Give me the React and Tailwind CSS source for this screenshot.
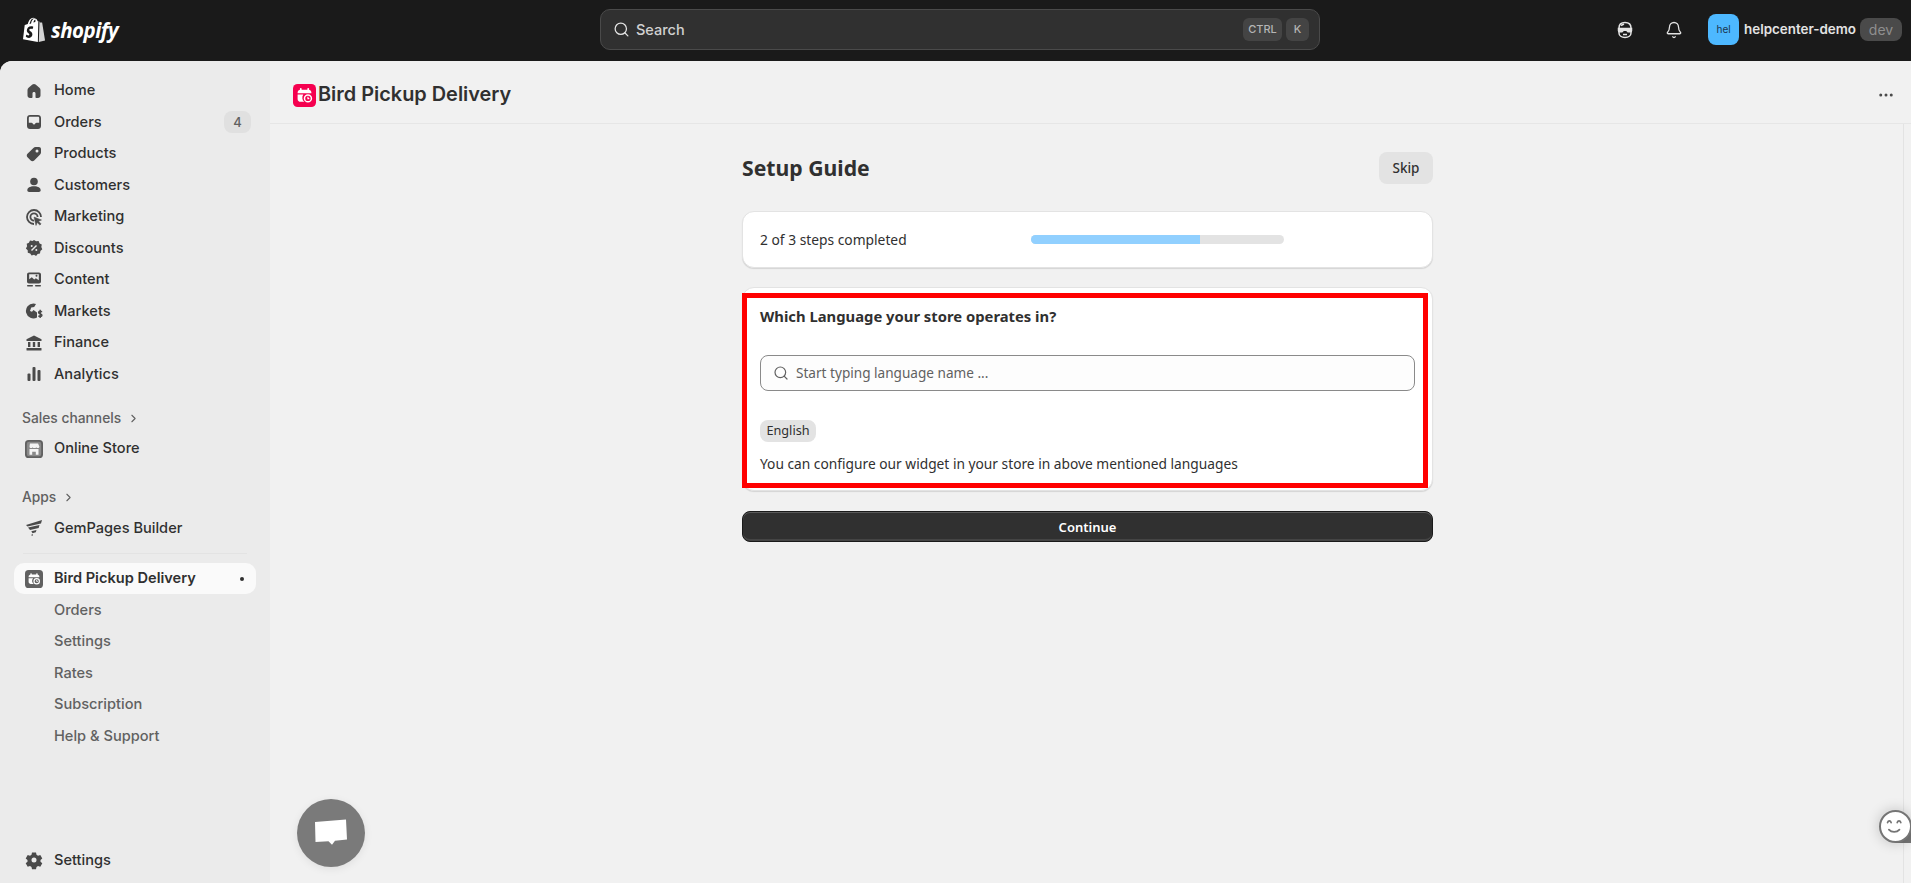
import React from 'react';
import { Search, Bell, ChevronRight, MoreHorizontal } from 'lucide-react';

const sans = "font-['Inter','Noto_Sans',sans-serif]";

const HomeIcon = () => (
  <svg viewBox="0 0 20 20" className="w-5 h-5 fill-[#4a4a4a]">
    <path d="M10 3c-.6 0-1.100.2-1.600.6l-3.800 3.200c-.7.600-1.100 1.400-1.100 2.300v5.400c0 1.400 1.100 2.500 2.500 2.500h1.500c.6 0 1-.4 1-1v-3.500c0-.8.600-1.400 1.500-1.400s1.500.6 1.500 1.400v3.500c0 .6.400 1 1 1h1.500c1.400 0 2.500-1.100 2.500-2.500v-5.400c0-.9-.4-1.700-1.100-2.300l-3.800-3.200c-.5-.4-1-.6-1.600-.6z" />
  </svg>
);

const OrdersIcon = () => (
  <svg viewBox="0 0 20 20" className="w-5 h-5 fill-[#4a4a4a]">
    <path fillRule="evenodd" d="M3 6c0-1.700 1.300-3 3-3h8c1.700 0 3 1.300 3 3v8c0 1.700-1.300 3-3 3h-8c-1.700 0-3-1.300-3-3v-8zm1.800 4.700v-4.700c0-.7.500-1.200 1.200-1.200h8c.7 0 1.200.5 1.200 1.200v4.700h-2.700c-.6 0-1 .3-1.200.8-.2.600-.7 1-1.300 1s-1.100-.4-1.300-1c-.2-.5-.6-.8-1.200-.8h-2.700z" />
  </svg>
);

const TagIcon = () => (
  <svg viewBox="0 0 20 20" className="w-5 h-5 fill-[#4a4a4a]">
    <path fillRule="evenodd" d="M11.500 3h3.500c1.100 0 2 .9 2 2v3.500c0 .8-.3 1.500-.9 2.100l-5.900 5.900c-1 1-2.600 1-3.500 0l-3.200-3.200c-1-1-1-2.600 0-3.500l5.900-5.900c.6-.6 1.300-.9 2.100-.9zm1.500 5.500a1.500 1.500 0 1 0 0-3 1.500 1.500 0 0 0 0 3z" />
  </svg>
);

const PersonIcon = () => (
  <svg viewBox="0 0 20 20" className="w-5 h-5 fill-[#4a4a4a]">
    <circle cx="10" cy="6.500" r="3.800" />
    <path d="M3.300 15.300c0-2.400 2.500-4 6.700-4s6.700 1.600 6.700 4c0 1.100-.8 1.700-1.800 1.700h-9.800c-1 0-1.800-.6-1.800-1.700z" />
  </svg>
);

const MarketingIcon = () => (
  <svg viewBox="0 0 20 20" className="w-5 h-5 fill-none stroke-[#4a4a4a]">
    <path strokeWidth="1.800" d="M10 17a7 7 0 1 1 7-7" />
    <path strokeWidth="1.800" d="M10 13.600a3.600 3.600 0 1 1 3.600-3.600" />
    <path className="fill-[#4a4a4a]" strokeWidth="0.500" d="M10 10l7.500 3-3 1.200 2.600 2.700-1.200 1.200-2.700-2.600-1.200 3z" />
  </svg>
);

const DiscountIcon = () => (
  <svg viewBox="0 0 20 20" className="w-5 h-5 fill-[#4a4a4a]">
    <path fillRule="evenodd" d="M10 2l2.100 1.300 2.500-.2 1 2.300 2.200 1.200-.5 2.400 1 2.300-1.900 1.600-.4 2.500-2.400.5-1.500 2-2.100-1.200-2.400.7-1.400-2-2.400-.7-.1-2.500-1.800-1.700 1.200-2.200-.4-2.500 2.200-1 1.100-2.200 2.500.4z" />
    <path stroke="#ebebeb" strokeWidth="1.500" d="M7.500 12.500l5-5" />
    <circle cx="7.700" cy="8" r="1" fill="#ebebeb" />
    <circle cx="12.300" cy="12" r="1" fill="#ebebeb" />
  </svg>
);

const ContentIcon = () => (
  <svg viewBox="0 0 20 20" className="w-5 h-5 fill-[#4a4a4a]">
    <path fillRule="evenodd" d="M5 2.500h10c1.100 0 2 .9 2 2v7c0 1.100-.9 2-2 2h-10c-1.100 0-2-.9-2-2v-7c0-1.100.9-2 2-2zm.2 1.800v5l2.600-2 2.400 2.200 1.700-1.200 2.900 2v-6zm7.300 2.500a1 1 0 1 0 0-2 1 1 0 0 0 0 2z" />
    <rect x="3" y="15" width="6" height="1.500" rx=".7" />
    <rect x="11" y="15" width="6" height="1.500" rx=".7" />
  </svg>
);

const MarketsIcon = () => (
  <svg viewBox="0 0 20 20" className="w-5 h-5 fill-[#4a4a4a]">
    <path d="M9.500 2.500a7.500 7.500 0 1 0 3.500 14.100v-5.100l-3.500-2.500-1.500 1.800-2-.8 1.200-3.500 3-.5 1.800-2.900c-.8-.4-1.600-.6-2.500-.6z" />
    <path fill="none" stroke="#4a4a4a" strokeWidth="1.500" d="M17.800 11.200c-.3-.7-1-1-1.600-1-.9 0-1.600.5-1.600 1.300 0 1.800 3.300 1 3.300 2.800 0 .8-.8 1.300-1.700 1.300-.7 0-1.400-.4-1.700-1M16.200 8.800v8.200" />
  </svg>
);

const FinanceIcon = () => (
  <svg viewBox="0 0 20 20" className="w-5 h-5 fill-[#4a4a4a]">
    <path d="M10 2.500l7.500 3.700v1.800h-15v-1.800z" />
    <rect x="4" y="9" width="2.400" height="5" />
    <rect x="8.800" y="9" width="2.400" height="5" />
    <rect x="13.600" y="9" width="2.400" height="5" />
    <rect x="2.500" y="15" width="15" height="2.500" rx=".5" />
  </svg>
);

const AnalyticsIcon = () => (
  <svg viewBox="0 0 20 20" className="w-5 h-5 fill-[#4a4a4a]">
    <rect x="3.500" y="9.500" width="3" height="7.500" rx="1" />
    <rect x="8.500" y="3" width="3" height="14" rx="1" />
    <rect x="13.500" y="6" width="3" height="11" rx="1" />
  </svg>
);

const StoreIcon = () => (
  <svg viewBox="0 0 20 20" className="w-[18px] h-[18px] ml-px">
    <rect width="20" height="20" rx="4" fill="#616161" />
    <rect x="2" y="2" width="16" height="16" rx="2.500" fill="#8a8a8a" />
    <path fill="#f5f5f5" d="M5.500 4h9l1.500 3.200c0 1-.9 1.800-1.800 1.800-.7 0-1.400-.4-1.700-1-.4.600-1 1-1.700 1h-.6c-.7 0-1.300-.4-1.700-1-.3.600-1 1-1.700 1-.9 0-1.800-.8-1.800-1.800z" />
    <path fill="#f5f5f5" d="M5 10h10v6.500h-3v-3.500h-4v3.500h-3z" />
  </svg>
);

const GemIcon = () => (
  <svg viewBox="0 0 20 20" className="w-5 h-5 fill-[#4a4a4a]">
    <path d="M18 2l-1 3.500-13.500 3-1.500-1.500zM15.500 7l-.8 3-8.700 2-2-2.500zM12.500 12l-.7 2.300-3.300 1-1.200-2zM9 16l-.5 2-1.500-1z" />
  </svg>
);

const CalendarIcon = ({ bg, fg, className }) => (
  <svg viewBox="0 0 20 20" className={className}>
    <rect width="20" height="20" rx="4" fill={bg} />
    <path fill={fg} d="M4 7.500c0-1.400 1.100-2.500 2.500-2.500h7c1.400 0 2.500 1.100 2.500 2.500v.5h-12zM4 9.200h5a4.600 4.600 0 0 0 .8 6.300h-3.300c-1.400 0-2.500-1.100-2.500-2.500z" />
    <rect x="6" y="3.500" width="1.500" height="2.500" rx=".7" fill={fg} />
    <rect x="12.500" y="3.500" width="1.500" height="2.500" rx=".7" fill={fg} />
    <circle cx="13" cy="12.500" r="3" fill="none" stroke={fg} strokeWidth="1.300" />
    <path stroke={fg} strokeWidth="1" d="M13 11v1.700h1.200" fill="none" />
  </svg>
);

const GearIcon = () => (
  <svg viewBox="0 0 20 20" className="w-5 h-5 fill-[#4a4a4a]">
    <path fillRule="evenodd" d="M8 2.500h4l.5 2.300 1.500.9 2.300-.7 2 3.400-1.800 1.600v1.700l1.800 1.600-2 3.400-2.300-.7-1.500.9-.5 2.300h-4l-.5-2.300-1.500-.9-2.300.7-2-3.400 1.800-1.600v-1.700l-1.800-1.600 2-3.400 2.300.7 1.500-.9zm2 10a2.500 2.500 0 1 0 0-5 2.500 2.500 0 0 0 0 5z" />
  </svg>
);

const GhostIcon = () => (
  <svg viewBox="0 0 20 20" className="w-5 h-5 fill-none stroke-[#e3e3e3]" strokeWidth="1.500">
    <path d="M4 8c0-3.500 2.500-5.500 6-5.500s6 2 6 5.500v5c0 2.600-2.500 4.500-6 4.500s-6-1.900-6-4.500z" />
    <path className="fill-[#e3e3e3]" d="M3.500 8.500h13v2.300c0 .6-.5 1-1 1h-2.500l-1.500-1.500h-3l-1.500 1.500h-2.500c-.5 0-1-.4-1-1z" />
    <path d="M8 14.500h4M6 5.500l3-1.500" />
  </svg>
);

const mainNav = [
  ['Home', HomeIcon],
  ['Orders', OrdersIcon, '4'],
  ['Products', TagIcon],
  ['Customers', PersonIcon],
  ['Marketing', MarketingIcon],
  ['Discounts', DiscountIcon],
  ['Content', ContentIcon],
  ['Markets', MarketsIcon],
  ['Finance', FinanceIcon],
  ['Analytics', AnalyticsIcon],
];

const subNav = ['Orders', 'Settings', 'Rates', 'Subscription', 'Help & Support'];

const NavItem = ({ label, Icon, badge }) => (
  <div className="flex items-center h-[31.5px] pl-[24px] pr-[19px]">
    <span className="w-[30px] flex items-center"><Icon /></span>
    <span className="text-[14.6px] font-[450] text-[#303030] leading-none">{label}</span>
    {badge && (
      <span className="ml-auto w-[27px] h-[22px] rounded-lg bg-[#e0e0e0] text-[13px] font-medium text-[#616161] flex items-center justify-center">{badge}</span>
    )}
  </div>
);

const SectionLabel = ({ label }) => (
  <div className="flex items-center gap-[6px] pl-[22px] h-[20px] text-[13.8px] font-[450] text-[#616161]">
    {label}
    <ChevronRight size={13} strokeWidth={2} />
  </div>
);

const Sidebar = () => (
  <aside className={`w-[270px] shrink-0 bg-[#ebebeb] rounded-tl-xl flex flex-col pt-[14px] pb-[7px] ${sans}`}>
    {mainNav.map(([label, Icon, badge]) => (
      <NavItem key={label} label={label} Icon={Icon} badge={badge} />
    ))}
    <div className="mt-[18px] mb-[5px]"><SectionLabel label="Sales channels" /></div>
    <NavItem label="Online Store" Icon={StoreIcon} />
    <div className="mt-[23px] mb-[5px]"><SectionLabel label="Apps" /></div>
    <NavItem label="GemPages Builder" Icon={GemIcon} />
    <div className="mx-[23px] mt-[9px] mb-[9px] h-px bg-[#e3e3e3]" />
    <div className="mx-[14px] h-[31px] rounded-[10px] bg-[#fafafa] flex items-center pl-[11px] pr-[12px]">
      <span className="w-[29px] flex items-center">
        <CalendarIcon bg="#616161" fg="#ffffff" className="w-[18px] h-[18px]" />
      </span>
      <span className="text-[14.6px] font-semibold text-[#303030]">Bird Pickup Delivery</span>
      <span className="ml-auto w-[4px] h-[4px] rounded-full bg-[#303030]" />
    </div>
    <div className="pt-[1px]">
      {subNav.map((label) => (
        <div key={label} className="h-[31.5px] pl-[54px] flex items-center text-[14.6px] font-[450] text-[#616161]">{label}</div>
      ))}
    </div>
    <div className="mt-auto"><NavItem label="Settings" Icon={GearIcon} /></div>
  </aside>
);

const TopBar = () => (
  <header className={`h-[61px] shrink-0 bg-[#1a1a1a] flex items-center pl-[23px] pr-[9px] pb-[2px] ${sans}`}>
    <div className="w-[577px] shrink-0 flex items-center gap-[5px] pt-[2px]">
      <svg viewBox="0 0 24 27" className="w-[23px] h-[27px]">
        <path fill="#ffffff" d="M16.500 3.500l-1.200.4C14.800 2.400 13.900 1 12.400 1h-.2C11.700.4 11.200.2 10.700.2 7.200.2 5.500 4.600 5 6.800l-2.400.8c-.8.200-.8.300-.9 1L0 22.500l15.500 2.900.5-21.900zM12.800 4.600l-2 .6c.4-1.400 1.100-2.800 2-3.100.3.700.3 1.600 0 2.500zM10.700 1c.3 0 .5.100.7.300-1.200.6-2.500 2-3 4.800l-1.600.5C7.300 5 8.500 1 10.700 1z" />
        <path fill="#d4d4d4" d="M17.200 3.500l-.7 21.900 6.500-1.500L20 5.500c0-.200-.2-.3-.3-.3l-1.900-.1z" />
        <path fill="#1a1a1a" d="M10.800 9.500l-.9 2.700s-.8-.4-1.800-.4c-1.400 0-1.500.9-1.500 1.100 0 1.200 3.200 1.700 3.200 4.600 0 2.300-1.400 3.700-3.400 3.700-2.300 0-3.500-1.500-3.500-1.500l.6-2.100s1.200 1 2.200 1c.7 0 .9-.5.900-.9 0-1.600-2.600-1.700-2.600-4.300 0-2.200 1.600-4.400 4.800-4.400 1.300 0 1.900.5 1.900.5z" />
      </svg>
      <span className="text-[20.5px] font-['Open_Sans',sans-serif] font-bold italic text-white tracking-[-0.5px] leading-none">shopify</span>
    </div>
    <div className="w-[720px] h-[41px] shrink-0 rounded-[10px] bg-[#303030] border border-[#4a4a4a] flex items-center pl-[12px] pr-[10px]">
      <Search size={17} strokeWidth={1.8} className="text-[#e3e3e3]" />
      <span className="ml-[6px] text-[14.5px] font-[450] text-[#d0d0d0]">Search</span>
      <span className="ml-auto flex gap-[4px]">
        <span className="w-[39px] h-[23px] rounded-md bg-[#444444] text-[11px] font-medium text-[#b5b5b5] flex items-center justify-center">CTRL</span>
        <span className="w-[23px] h-[23px] rounded-md bg-[#444444] text-[11px] font-medium text-[#b5b5b5] flex items-center justify-center">K</span>
      </span>
    </div>
    <div className="ml-auto flex items-center">
      <GhostIcon />
      <Bell size={18} strokeWidth={1.7} className="ml-[30px] text-[#e3e3e3]" />
      <span className="ml-[25px] w-[31px] h-[31px] rounded-lg bg-[#4db8ff] text-[10px] text-[#1a3550] flex items-center justify-center">hel</span>
      <span className="ml-[5px] text-[13.4px] font-semibold text-[#e3e3e3]">helpcenter-demo</span>
      <span className="ml-[4px] w-[42px] h-[23px] rounded-lg bg-[#4a4a4a] text-[14px] text-[#8f8f8f] flex items-center justify-center">dev</span>
    </div>
  </header>
);

const Card = ({ className, children }) => (
  <div className={`rounded-xl bg-white border border-[#e3e3e3] shadow-[0_1px_1px_rgba(0,0,0,0.12)] ${className}`}>{children}</div>
);

const SetupGuide = () => (
  <div className="w-[691px] mx-auto pt-[28px] font-['Noto_Sans',sans-serif]">
    <div className="flex items-center justify-between h-[32px]">
      <h1 className="text-[21.2px] font-bold text-[#303030] leading-none">Setup Guide</h1>
      <button className="w-[54px] h-[32px] rounded-lg bg-[#e3e3e3] text-[13.5px] font-medium text-[#303030]">Skip</button>
    </div>
    <Card className="mt-[27px] h-[57px] flex items-center pl-[17px]">
      <span className="w-[271px] shrink-0 pt-[2px] text-[13.8px] text-[#303030]">2 of 3 steps completed</span>
      <div className="w-[253px] h-[9px] rounded-full bg-[#e3e3e3] overflow-hidden">
        <div className="w-2/3 h-full bg-[#91d0ff]" />
      </div>
    </Card>
    <Card className="relative mt-[19px] h-[204px] px-[17px]">
      <div className="absolute left-[-1px] top-[5px] w-[686px] h-[195px] border-[5px] border-[#ff0000]" />
      <h2 className="pt-[17px] text-[14.8px] font-bold text-[#303030] leading-[22px]">Which Language your store operates in?</h2>
      <div className="mt-[28px] w-[655px] h-[36px] rounded-lg bg-[#fdfdfd] border border-[#8a8a8a] flex items-center pl-[12px]">
        <Search size={16} strokeWidth={1.8} className="text-[#616161]" />
        <span className="ml-[7px] text-[13.6px] text-[#616161]">Start typing language name ...</span>
      </div>
      <span className="mt-[29px] w-[56px] h-[22px] rounded-lg bg-[#e3e3e3] text-[12.7px] text-[#303030] flex items-center justify-center">English</span>
      <p className="mt-[12px] text-[13.75px] leading-[20px] text-[#303030]">You can configure our widget in your store in above mentioned languages</p>
    </Card>
    <button className="mt-[20px] w-full h-[31px] pt-[2px] rounded-lg bg-[#303030] border border-[#1a1a1a] shadow-[inset_0_1px_0_#5a5a5a,inset_0_-2px_0_#444444] text-[13px] font-semibold text-white">Continue</button>
  </div>
);

export default function App() {
  return (
    <div className="relative w-[1911px] h-[883px] overflow-hidden flex flex-col bg-[#1a1a1a]">
      <TopBar />
      <div className="flex-1 flex min-h-0 rounded-tl-xl bg-[#f1f1f1]">
        <Sidebar />
        <main className="flex-1 flex flex-col min-w-0">
          <div className={`h-[63px] shrink-0 border-b border-[#e6e6e6] flex items-center pl-[23px] pr-[16px] pt-[6px] ${sans}`}>
            <CalendarIcon bg="#f5004f" fg="#ffffff" className="w-[23px] h-[23px]" />
            <span className="ml-[2px] text-[19.9px] font-semibold text-[#303030]">Bird Pickup Delivery</span>
            <MoreHorizontal size={18} className="ml-auto text-[#4a4a4a]" />
          </div>
          <div className="flex-1 border-r border-[#e3e3e3] mr-[7px] pl-[2px]">
            <SetupGuide />
          </div>
        </main>
      </div>

      <div className="absolute left-[297px] top-[799px] w-[68px] h-[68px] rounded-full bg-[#7a7a7a] shadow-[0_2px_8px_rgba(0,0,0,0.08)] flex items-center justify-center">
        <svg viewBox="0 0 34 30" className="w-[34px] h-[30px]">
          <path fill="#ffffff" d="M1 4L32 1.500l1 20-12 1.300-3 4-3.500-3.500-13 .7z" />
        </svg>
      </div>

      <div className="absolute left-[1895px] top-[826px] w-[16px] h-[17px] bg-[#757575]" />
      <div className="absolute left-[1879px] top-[810px] w-[33px] h-[33px] rounded-full bg-white border-2 border-[#757575] shadow-[0_0_14px_rgba(0,0,0,0.2)]">
        <svg viewBox="0 0 33 33" className="w-full h-full fill-none stroke-[#757575]" strokeWidth="2" strokeLinecap="round">
          <path d="M7.500 12c.8-2.400 3.200-2.400 4 0M18.500 12c.8-2.400 3.200-2.400 4 0" />
          <path d="M9 20c3 3.500 9 3.500 12 0" />
        </svg>
      </div>
    </div>
  );
}
